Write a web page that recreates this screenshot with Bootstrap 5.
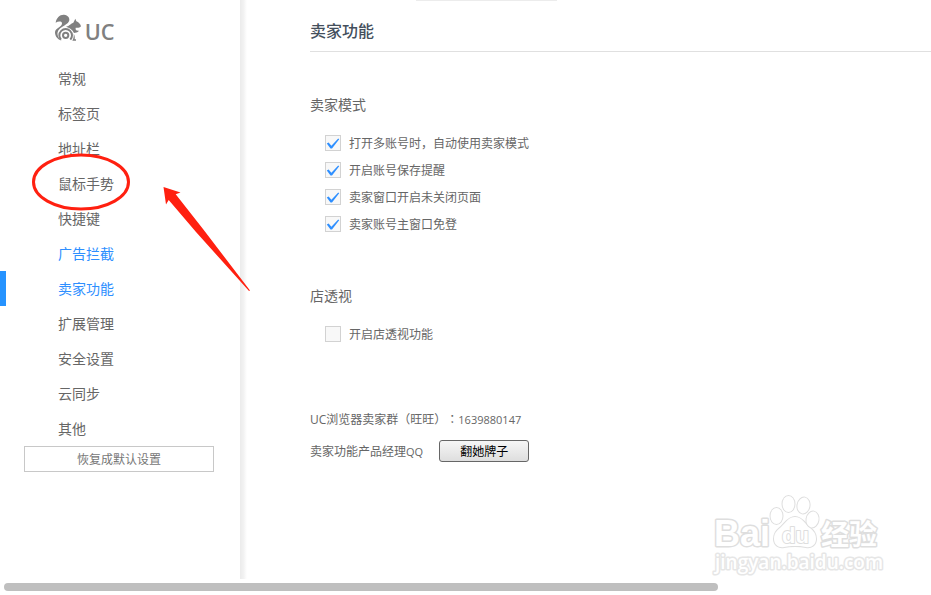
<!DOCTYPE html>
<html lang="zh-CN">
<head>
<meta charset="utf-8">
<meta name="viewport" content="width=device-width, initial-scale=1">
<title>卖家功能</title>
<link rel="stylesheet" href="https://cdn.jsdelivr.net/npm/bootstrap@5.3.0/dist/css/bootstrap.min.css">
<style>
body { font-family: "Open Sans", "Noto Sans CJK SC", sans-serif; font-size: 12px; line-height: 20px; color: #666; background: #fff; font-feature-settings: "chws" 0; text-spacing-trim: space-all; }
.sidebar { width: 240px; }
.sidebar-edge { width: 7px; background: linear-gradient(to right, #ebebeb 0, #f2f2f2 50%, #fff 100%); }
.brand { height: 61px; padding: 14px 0 0 54px; }
.side-nav .nav-link { height: 35px; padding: 0 0 0 52px; border-left: 6px solid transparent; font-size: 14px; line-height: 35px; color: #666; }
.side-nav .nav-link.highlight, .side-nav .nav-link.active { color: #2e8fff; }
.side-nav .nav-link.active { border-left-color: #2693ff; }
.reset-btn { width: 190px; height: 26px; margin-left: 24px; border: 1px solid #c8c8c8; background: #fff; color: #777; }
.content { padding-left: 63px; }
.page-title { height: 52px; padding-top: 19px; font-size: 16px; line-height: 24px; font-weight: 500; color: #444f5c; border-bottom: 1px solid #e0e0e0; }
.group-title { font-size: 14px; line-height: 20px; font-weight: 400; margin-bottom: 14px; }
.group-first { padding-top: 43px; }
.group-next { padding-top: 49px; }
.contact { padding-top: 63px; }
.option { height: 27px; padding-left: 15px; }
.option label, .contact-row span { padding-top: 2px; }
.option .form-check-input { width: 16px; height: 16px; margin: 0; border: 1px solid #d2d2d2; border-radius: 0; background-color: #f8f8f8; box-shadow: none; }
.option .form-check-input:checked { background-color: #f8f8f8; background-size: 16px 16px; background-image: url("data:image/svg+xml,%3Csvg xmlns='http://www.w3.org/2000/svg' viewBox='0 0 16 16'%3E%3Cpath fill='%232e8fff' d='M1.8 8.4 3.6 7.4 6.4 10.7 13.2 3.4 14.2 4.2 7 13.6 5.5 13.6z'/%3E%3C/svg%3E"); }
.latin { font-size: 11px; }
.fw-colon { font-family: "Noto Sans CJK TC", sans-serif; line-height: 1; }
.contact-row { margin-top: 10px; }
.flip-btn { width: 90px; height: 22px; border: 1px solid #666; border-radius: 3px; color: #000; background: linear-gradient(#f6f6f6, #dedede); }
.scroll-track { height: 16px; padding: 4px 4px 0; }
.scroll-thumb { width: 77.4%; height: 8px; border-radius: 4px; background: #bfbfbf; }
.top-tab { top: 0; left: 416px; width: 141px; height: 1px; background: #ececec; }
.annotation { top: 0; left: 0; pointer-events: none; }
.watermark { right: 48px; bottom: 18px; pointer-events: none; }
</style>
<script src="https://cdn.jsdelivr.net/npm/bootstrap@5.3.0/dist/js/bootstrap.bundle.min.js"></script>
</head>
<body>
<div class="d-flex flex-column min-vh-100 position-relative overflow-hidden">
  <div class="d-flex flex-grow-1">
    <aside class="sidebar flex-shrink-0">
      <div class="brand">
        <svg class="d-block overflow-visible" width="64" height="30" viewBox="42 42 192 90" role="img" aria-label="UC">
          <g fill="#808080">
            <path d="M45 97C45 84 68 80 66 69C64 63 54 64 47 68C49 53 60 43 72 44C84 45 91 55 87 64C84 71 74 76 66 81C57 87 51 94 53 105C54 112 59 118 65 122C53 119 45 109 45 97Z"/>
            <path d="M78 80C88 78 93 70 100 68L106 56L109 64C116 66 121 72 123 79C119 84 112 84 107 83C106 89 108 93 117 92C113 98 106 98 102 99C98 88 88 83 78 80Z"/>
            <path d="M97 122C101 116 102 108 101 102C104 106 105 112 104 118H108V122Z"/>
          </g>
          <g fill="none" stroke="#808080">
            <path stroke-width="6" d="M63 119A19 19 0 1 1 91 119"/>
            <circle stroke-width="6" cx="77" cy="106" r="8"/>
          </g>
          <text x="134" y="119" font-family="Open Sans, sans-serif" font-size="65" font-weight="600" fill="#808080">UC</text>
        </svg>
      </div>
      <nav class="nav flex-column side-nav" aria-label="设置">
        <a class="nav-link" href="#">常规</a>
        <a class="nav-link" href="#">标签页</a>
        <a class="nav-link" href="#">地址栏</a>
        <a class="nav-link" href="#">鼠标手势</a>
        <a class="nav-link" href="#">快捷键</a>
        <a class="nav-link highlight" href="#">广告拦截</a>
        <a class="nav-link active" aria-current="page" href="#">卖家功能</a>
        <a class="nav-link" href="#">扩展管理</a>
        <a class="nav-link" href="#">安全设置</a>
        <a class="nav-link" href="#">云同步</a>
        <a class="nav-link" href="#">其他</a>
      </nav>
      <button type="button" class="reset-btn d-block px-0 pb-0">恢复成默认设置</button>
    </aside>
    <div class="sidebar-edge flex-shrink-0"></div>
    <main class="content flex-grow-1">
      <h1 class="page-title mb-0">卖家功能</h1>
      <section class="group-first">
        <h2 class="group-title">卖家模式</h2>
        <div class="option d-flex align-items-center gap-2"><input class="form-check-input" type="checkbox" id="multi" checked><label for="multi">打开多账号时，自动使用卖家模式</label></div>
        <div class="option d-flex align-items-center gap-2"><input class="form-check-input" type="checkbox" id="save" checked><label for="save">开启账号保存提醒</label></div>
        <div class="option d-flex align-items-center gap-2"><input class="form-check-input" type="checkbox" id="pages" checked><label for="pages">卖家窗口开启未关闭页面</label></div>
        <div class="option d-flex align-items-center gap-2"><input class="form-check-input" type="checkbox" id="login" checked><label for="login">卖家账号主窗口免登</label></div>
      </section>
      <section class="group-next">
        <h2 class="group-title">店透视</h2>
        <div class="option d-flex align-items-center gap-2"><input class="form-check-input" type="checkbox" id="lens"><label for="lens">开启店透视功能</label></div>
      </section>
      <section class="contact">
        <p class="mb-0">UC浏览器卖家群（旺旺）<span class="fw-colon" lang="zh-TW">：</span><span class="latin">1639880147</span></p>
        <div class="contact-row d-flex align-items-center">
          <span class="me-3">卖家功能产品经理<span class="latin">QQ</span></span>
          <button type="button" class="flip-btn px-0 pb-0">翻她牌子</button>
        </div>
      </section>
    </main>
  </div>
  <div class="scroll-track"><div class="scroll-thumb"></div></div>

  <div class="top-tab position-absolute"></div>
  <svg class="annotation position-absolute" width="260" height="300" aria-hidden="true">
    <ellipse cx="81" cy="182" rx="47.500" ry="27" fill="none" stroke="#ff2010" stroke-width="3"/>
    <path d="M163.500 187 180.500 192.500 175.700 194.300 203 229 250 290.500 249 291 196 232 168.700 200 166 204.500Z" fill="#ff2010"/>
  </svg>
  <svg class="watermark position-absolute overflow-visible" width="170" height="84" viewBox="0 0 170 84" role="img" aria-label="Baidu 经验">
    <g fill="#fff" stroke="#dedede" stroke-width="3" stroke-linejoin="round" paint-order="stroke">
      <text x="1" y="53" font-family="Liberation Sans, sans-serif" font-weight="700" font-size="36">Bai</text>
      <g stroke-width="2">
        <path d="M82 24C88 24 91 29 95 33C99 37 103 39 103 46C103 52 98 55 93 54C88 53 86 53 82 53C78 53 76 53 71 54C66 55 61 52 61 46C61 39 65 37 69 33C73 29 76 24 82 24Z"/>
        <ellipse cx="63.500" cy="23" rx="6" ry="8"/>
        <ellipse cx="75.500" cy="11" rx="6" ry="8"/>
        <ellipse cx="90.500" cy="12.500" rx="6" ry="8" transform="rotate(10 90.500 12.500)"/>
        <ellipse cx="99.500" cy="26.500" rx="6" ry="8" transform="rotate(10 99.500 26.500)"/>
      </g>
      <text x="69" y="50" font-family="Liberation Sans, sans-serif" font-weight="700" font-size="22" stroke-width="2">du</text>
      <text x="108" y="52" font-family="Noto Sans CJK SC, sans-serif" font-weight="700" font-size="28">经验</text>
      <text x="2" y="76" font-family="Open Sans, sans-serif" font-weight="600" font-size="19" stroke="#e6e6e6">jingyan.baidu.com</text>
    </g>
  </svg>
</div>
</body>
</html>
